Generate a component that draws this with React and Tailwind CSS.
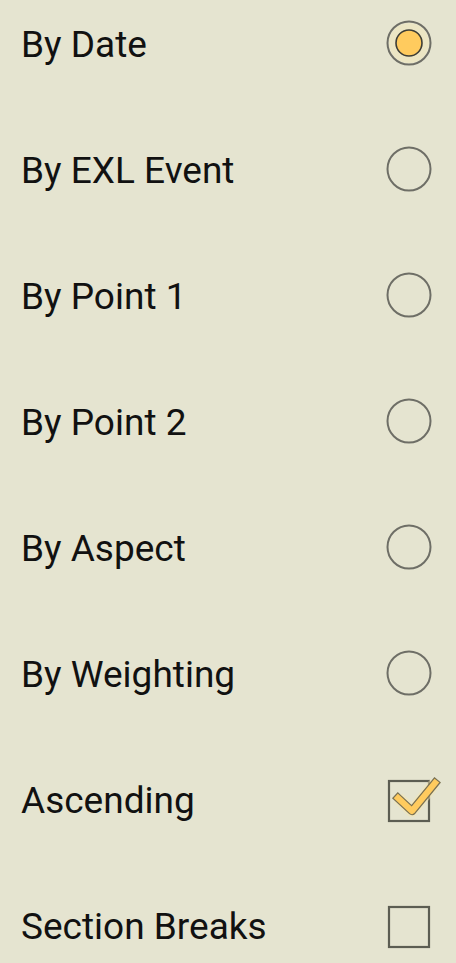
import React, { useState } from 'react';

const sortOptions = ['By Date', 'By EXL Event', 'By Point 1', 'By Point 2', 'By Aspect', 'By Weighting'];

function Radio({ checked }) {
  return (
    <svg width="48" height="48" viewBox="0 0 48 48">
      {checked && <circle cx="24" cy="24" r="20" fill="#ece6c4" />}
      <circle cx="24" cy="24" r="21.5" fill="none" stroke="#6e6e66" strokeWidth="2" />
      {checked && <circle cx="24" cy="24" r="13" fill="#ffcb5e" stroke="#3e3e36" strokeWidth="1.6" />}
    </svg>
  );
}

function Checkbox({ checked }) {
  return (
    <svg width="52" height="52" viewBox="0 0 52 52" className="overflow-visible">
      <rect x="6" y="8" width="40" height="40" fill="none" stroke="#5c5d52" strokeWidth="2.2" />
      {checked && (
        <>
          <polyline points="15,25 29,38 52,10" fill="none" stroke="#f6e6b0" strokeWidth="12" strokeLinejoin="round" opacity="0.5" />
          <polyline points="15,25 29,38 52,10" fill="none" stroke="#7a7152" strokeWidth="8.5" strokeLinejoin="round" strokeLinecap="square" />
          <polyline points="15,25 29,38 52,10" fill="none" stroke="#ffcb5e" strokeWidth="6" strokeLinejoin="round" strokeLinecap="square" />
        </>
      )}
    </svg>
  );
}

function Row({ label, children, onClick }) {
  return (
    <div onClick={onClick} className="flex items-center justify-between h-[126px] pl-[21px] pr-[23px] cursor-pointer">
      <span className="text-[37px] leading-[44px] mt-[3px] text-[#111111]">{label}</span>
      {children}
    </div>
  );
}

export default function App() {
  const [sortBy, setSortBy] = useState('By Date');
  const [ascending, setAscending] = useState(true);
  const [breaks, setBreaks] = useState(false);

  return (
    <div className="w-[456px] h-[963px] overflow-hidden bg-[#e5e4d0]" style={{ fontFamily: 'Roboto, sans-serif' }}>
      <div className="-mt-5 flex flex-col">
        {sortOptions.map((opt) => (
          <Row key={opt} label={opt} onClick={() => setSortBy(opt)}>
            <Radio checked={sortBy === opt} />
          </Row>
        ))}
        <Row label="Ascending" onClick={() => setAscending(!ascending)}>
          <div className="-mr-[2px]">
            <Checkbox checked={ascending} />
          </div>
        </Row>
        <Row label="Section Breaks" onClick={() => setBreaks(!breaks)}>
          <div className="-mr-[2px]">
            <Checkbox checked={breaks} />
          </div>
        </Row>
      </div>
    </div>
  );
}
